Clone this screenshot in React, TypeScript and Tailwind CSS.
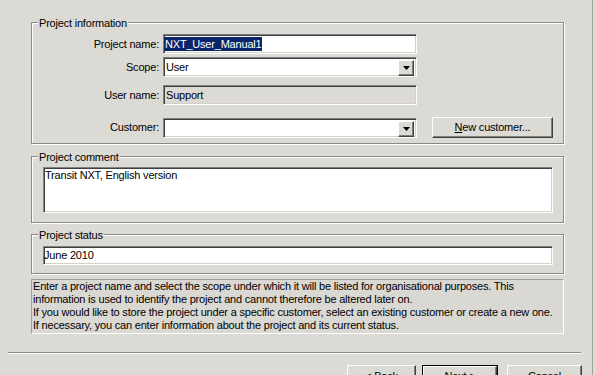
import React from "react";

const sunken =
  "border border-t-[#808080] border-l-[#808080] border-b-white border-r-white shadow-[inset_1px_1px_0_#404040,inset_-1px_-1px_0_#d4d0c8]";
const raised =
  "border border-t-white border-l-white border-b-[#404040] border-r-[#404040] shadow-[inset_-1px_-1px_0_#808080]";
const etched = "relative border border-[#8a8884] shadow-[inset_1px_1px_0_#ffffff,1px_1px_0_#ffffff]";

function Legend({ children }: { children: React.ReactNode }) {
  return (
    <span className="absolute left-[6px] -top-[6px] px-[1px] leading-[13px] bg-[#dcdad5] whitespace-nowrap">
      {children}
    </span>
  );
}

function Arrow() {
  return (
    <div className={`absolute right-[2px] top-[2px] w-[16px] h-[16px] bg-[#dcdad5] flex items-center justify-center ${raised}`}>
      <svg width="7" height="4" viewBox="0 0 7 4">
        <path d="M0 0H7L3.5 4Z" fill="#000" />
      </svg>
    </div>
  );
}

function Label({ children }: { children: React.ReactNode }) {
  return <div className="w-[127px] text-right leading-[13px] whitespace-nowrap">{children}</div>;
}

export default function App() {
  return (
    <div className="w-[596px] h-[375px] overflow-hidden bg-[#dcdad5] text-black text-[11px] tracking-[-0.2px] font-['Liberation_Sans',Arial,sans-serif] flex">
      <div className="w-[593px] h-full border-r border-r-[#a3a19d] shrink-0 flex flex-col pt-[22px]">
        {/* Project information */}
        <div className={`${etched} ml-[31px] w-[533px] h-[122px] shrink-0`}>
          <Legend>Project information</Legend>
          <div className="flex flex-col pt-[11px]">
            <div className="flex items-center h-[20px]">
              <Label>Project name:</Label>
              <div className={`ml-[4px] w-[254px] h-[20px] bg-white flex items-center pl-[0px] ${sunken}`}>
                <span className="bg-[#0a246a] text-white leading-[14px] px-[1px]">NXT_User_Manual1</span>
              </div>
            </div>
            <div className="flex items-center h-[20px] mt-[3px]">
              <Label>Scope:</Label>
              <div className={`relative ml-[4px] w-[254px] h-[20px] bg-white flex items-center pl-[2px] ${sunken}`}>
                <span className="leading-[13px]">User</span>
                <Arrow />
              </div>
            </div>
            <div className="flex items-center h-[20px] mt-[8px]">
              <Label>User name:</Label>
              <div className={`ml-[4px] w-[254px] h-[20px] bg-[#dcdad5] flex items-center pl-[2px] ${sunken}`}>
                <span className="leading-[13px]">Support</span>
              </div>
            </div>
            <div className="flex items-center h-[21px] mt-[12px]">
              <Label>Customer:</Label>
              <div className={`relative ml-[4px] w-[254px] h-[20px] bg-white ${sunken}`}>
                <Arrow />
              </div>
              <div className={`ml-[15px] w-[121px] h-[21px] bg-[#dcdad5] flex items-center justify-center ${raised}`}>
                <span className="leading-[13px]">
                  <span className="underline">N</span>ew customer...
                </span>
              </div>
            </div>
          </div>
        </div>

        {/* Project comment */}
        <div className={`${etched} ml-[31px] mt-[12px] w-[533px] h-[67px] shrink-0`}>
          <Legend>Project comment</Legend>
          <div className={`ml-[11px] mt-[10px] w-[510px] h-[46px] bg-white ${sunken}`}>
            <div className="pl-[1px] pt-[1px] leading-[13px]">Transit NXT, English version</div>
          </div>
        </div>

        {/* Project status */}
        <div className={`${etched} ml-[31px] mt-[11px] w-[533px] h-[40px] shrink-0`}>
          <Legend>Project status</Legend>
          <div className={`ml-[11px] mt-[11px] w-[510px] h-[19px] bg-white flex items-center ${sunken}`}>
            <span className="leading-[13px]">June 2010</span>
          </div>
        </div>

        {/* Info */}
        <div className="ml-[31px] mt-[5px] w-[533px] h-[55px] shrink-0 border border-t-[#a09e9a] border-l-[#a09e9a] border-b-white border-r-white bg-[#dad8d3] pl-[1px] leading-[13px] whitespace-nowrap">
          <div>Enter a project name and select the scope under which it will be listed for organisational purposes. This</div>
          <div>information is used to identify the project and cannot therefore be altered later on.</div>
          <div>If you would like to store the project under a specific customer, select an existing customer or create a new one.</div>
          <div>If necessary, you can enter information about the project and its current status.</div>
        </div>

        {/* Separator */}
        <div className="ml-[8px] mt-[18px] w-[573px] h-[2px] shrink-0 border-t border-t-[#8a8884] border-b border-b-white" />

        {/* Buttons */}
        <div className="flex mt-[11px] shrink-0">
          <div className={`ml-[347px] w-[69px] h-[23px] bg-[#dcdad5] flex items-center justify-center ${raised}`}>
            <span className="leading-[13px]">&lt; Back</span>
          </div>
          <div className="ml-[6px] w-[76px] h-[23px] border border-black">
            <div className={`w-full h-full bg-[#dcdad5] flex items-center justify-center ${raised}`}>
              <span className="leading-[13px]">Next &gt;</span>
            </div>
          </div>
          <div className={`ml-[9px] w-[75px] h-[23px] bg-[#dcdad5] flex items-center justify-center ${raised}`}>
            <span className="leading-[13px]">Cancel</span>
          </div>
        </div>
      </div>
    </div>
  );
}
